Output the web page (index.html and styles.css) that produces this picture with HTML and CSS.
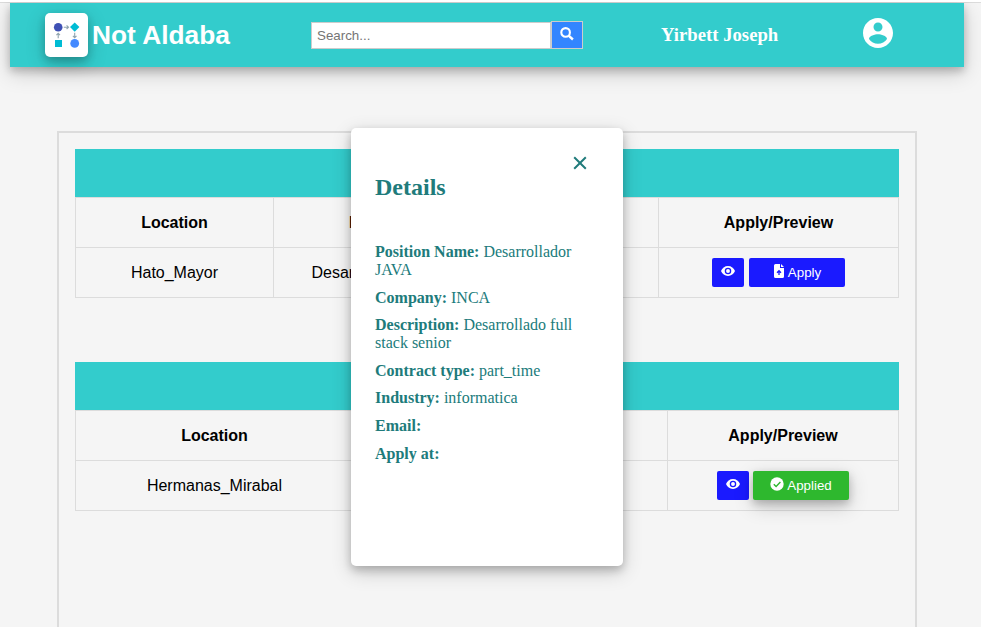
FILE: index.html
```html
<!DOCTYPE html>
<html lang="en">
<head>
<meta charset="utf-8">
<title>Not Aldaba</title>
<link rel="stylesheet" href="styles.css">
</head>
<body>
<header class="header">
  <div class="logo">
    <svg width="43" height="44" viewBox="0 0 43 44">
      <circle cx="13.2" cy="14.2" r="4.3" fill="#3f51b5"/>
      <path d="M29.7 9.4l4.7 4.7-4.7 4.7-4.7-4.7z" fill="#00bcd4"/>
      <path d="M10 27h7v7h-7z" fill="#00bcd4"/>
      <circle cx="29.7" cy="30.4" r="4.4" fill="#448aff"/>
      <path d="M18.8 14.2h4.5M21.6 12.4l1.9 1.8-1.9 1.8M29.7 19.8v4.7M27.9 22.8l1.8 1.9 1.8-1.9M13.2 25.2v-4.7M11.4 22.2l1.8-1.9 1.8 1.9" fill="none" stroke="#90a4ae" stroke-width="1.1"/>
    </svg>
  </div>
  <h1 class="brand">Not Aldaba</h1>
  <form class="search">
    <input class="search-input" type="text" placeholder="Search...">
    <button class="search-button" type="button" aria-label="Search">
      <svg width="14" height="14" viewBox="0 0 14 14"><circle cx="5.6" cy="5.4" r="4.3" fill="none" stroke="#fff" stroke-width="2.1"/><path d="M8.6 8.6l4.3 3.9" stroke="#fff" stroke-width="2.4"/></svg>
    </button>
  </form>
  <span class="user">Yirbett Joseph</span>
  <svg class="avatar" width="36" height="36" viewBox="0 0 24 24" fill="#fff"><path d="M12 2C6.48 2 2 6.48 2 12s4.48 10 10 10 10-4.48 10-10S17.52 2 12 2zm0 3c1.66 0 3 1.34 3 3s-1.34 3-3 3-3-1.34-3-3 1.34-3 3-3zm0 14.2c-2.5 0-4.71-1.28-6-3.22.03-1.99 4-3.08 6-3.08 1.99 0 5.97 1.09 6 3.08-1.29 1.94-3.5 3.22-6 3.22z"/></svg>
</header>

<main class="panel">
  <section class="listing">
    <div class="banner"></div>
    <div class="grid grid-first">
      <div class="cell head">Location</div><div class="cell head position">Position</div><div class="cell"></div><div class="cell head">Apply/Preview</div>
      <div class="cell">Hato_Mayor</div><div class="cell position">Desarrollador JAVA</div><div class="cell"></div>
      <div class="cell actions">
        <button class="btn eye" aria-label="Preview"><svg width="14" height="14" viewBox="0 0 24 24" fill="#fff"><path d="M12 3.5C6.5 3.5 2 7 0 12c2 5 6.500 8.500 12 8.500S22 17 24 12C22 7 17.500 3.500 12 3.500z"/><circle cx="12" cy="12" r="5.600" fill="#1a1aff"/><circle cx="12" cy="12" r="3.300"/></svg></button>
        <button class="btn wide"><svg width="12" height="14" viewBox="0 0 12 14"><path d="M2.500 0H7v4h4v8.500a1.500 1.500 0 0 1-1.500 1.500h-7A1.500 1.500 0 0 1 1 12.500v-11A1.500 1.500 0 0 1 2.500 0zM8 0l3 3H8z" fill="#fff"/><path d="M6 11V7M4 8.700l2-2 2 2" fill="none" stroke="#1a1aff" stroke-width="1.300"/></svg>Apply</button>
      </div>
    </div>
  </section>
  <section class="listing">
    <div class="banner"></div>
    <div class="grid grid-second">
      <div class="cell head">Location</div><div class="cell"></div><div class="cell head">Apply/Preview</div>
      <div class="cell">Hermanas_Mirabal</div><div class="cell"></div>
      <div class="cell actions tight">
        <button class="btn eye" aria-label="Preview"><svg width="14" height="14" viewBox="0 0 24 24" fill="#fff"><path d="M12 3.500C6.500 3.500 2 7 0 12c2 5 6.500 8.500 12 8.500S22 17 24 12C22 7 17.500 3.500 12 3.500z"/><circle cx="12" cy="12" r="5.600" fill="#1a1aff"/><circle cx="12" cy="12" r="3.300"/></svg></button>
        <button class="btn wide applied"><svg width="14" height="14" viewBox="0 0 14 14"><circle cx="7" cy="7" r="6.700" fill="#fff"/><path d="M3.800 7.200l2.300 2.300 4.300-4.500" fill="none" stroke="#2eb82e" stroke-width="1.400"/></svg>Applied</button>
      </div>
    </div>
  </section>
</main>

<aside class="modal" role="dialog">
  <button class="close" aria-label="Close"><svg width="14" height="14" viewBox="0 0 14 14"><path d="M1.200 1.200l11.600 11.600M12.800 1.200L1.200 12.800" stroke="#207b7b" stroke-width="2"/></svg></button>
  <h2 class="title">Details</h2>
  <p class="item"><b>Position Name:</b> Desarrollador JAVA</p>
  <p class="item"><b>Company:</b> INCA</p>
  <p class="item"><b>Description:</b> Desarrollado full stack senior</p>
  <p class="item"><b>Contract type:</b> part_time</p>
  <p class="item"><b>Industry:</b> informatica</p>
  <p class="item"><b>Email:</b></p>
  <p class="item"><b>Apply at:</b></p>
</aside>
</body>
</html>
```
FILE: styles.css
```css
* { box-sizing: border-box; }
html { background: #f5f5f5; }
body {
  margin: 0;
  height: 627px;
  overflow: hidden;
  border-top: 2px solid #fff;
  background: #f5f5f5;
  font-family: "Liberation Sans", Arial, sans-serif;
  color: #000;
}
body::before { content: ""; display: block; height: 1px; background: #dcdcdc; }
button { font-family: inherit; padding: 0; border: 0; }
svg { display: block; flex: none; }

.header {
  width: 954px;
  height: 64px;
  margin-left: 10px;
  padding-left: 35px;
  display: flex;
  align-items: center;
  background: #33cccc;
  box-shadow: 0 4px 8px 0 rgba(0, 0, 0, .2), 0 6px 20px 0 rgba(0, 0, 0, .19);
}
.logo {
  width: 43px;
  height: 44px;
  border-radius: 5px;
  background: #fff;
  box-shadow: 0 4px 8px 0 rgba(0, 0, 0, .2), 0 6px 20px 0 rgba(0, 0, 0, .19);
}
.brand { width: 219px; margin: 0 0 0 4px; font-size: 26.3px; line-height: 32px; color: #fff; white-space: nowrap; }
.search { display: flex; align-items: flex-end; width: 272px; height: 28px; }
.search-input {
  width: 240px;
  height: 27px;
  padding: 0 5px;
  border: 1px solid #ccc;
  border-radius: 0;
  font: 13.333px "Liberation Sans", sans-serif;
  background: #fff;
}
.search-input::placeholder { color: #757575; }
.search-button {
  display: flex;
  width: 32px;
  height: 28px;
  padding: 5px 0 0 8px;
  border: 1px solid #ccc;
  background: #3385ff;
}
.user { width: 199px; margin-left: 78px; font: bold 18.72px "Liberation Serif", serif; color: #fff; }
.avatar { margin-top: -4px; }

.panel {
  width: 860px;
  height: 496px;
  margin: 64px 0 0 57px;
  padding: 16px;
  border: 2px solid #dcdcdc;
  border-bottom: 0;
}
.listing + .listing { margin-top: 64px; }
.banner { height: 48px; background: #33cccc; }
.grid { display: grid; grid-auto-rows: 50px; border: solid #dcdcdc; border-width: 1px 0 0 1px; }
.grid-first { grid-template-columns: 198px 216px 169px 240px; }
.grid-second { grid-template-columns: 278px 314px 231px; }
.cell {
  display: flex;
  align-items: center;
  justify-content: center;
  border: solid #dcdcdc;
  border-width: 0 1px 1px 0;
  font-size: 16px;
}
.head { font-weight: bold; }
.position { padding-right: 2px; }
.actions { gap: 5px; }
.tight { gap: 4px; }
.btn {
  height: 29px;
  display: flex;
  align-items: center;
  justify-content: center;
  gap: 3px;
  border-radius: 2px;
  background: #1a1aff;
  color: #fff;
  font-size: 13.333px;
}
.btn svg { margin-top: -3px; }
.eye { width: 32px; }
.wide { width: 96px; }
.applied { background: #2eb82e; box-shadow: 0 4px 8px 0 rgba(0, 0, 0, .2), 0 6px 20px 0 rgba(0, 0, 0, .19); }

.modal {
  position: absolute;
  left: 351px;
  top: 128px;
  width: 272px;
  height: 438px;
  padding: 28px 24px;
  border-radius: 5px;
  background: #fff;
  box-shadow: 0 4px 8px 0 rgba(0, 0, 0, .2), 0 6px 20px 0 rgba(0, 0, 0, .19);
  color: #207b7b;
  font-family: "Liberation Serif", serif;
}
.close { display: block; margin: 0 12.5px 0 auto; background: none; }
.title { margin: 3px 0 42px; font-size: 24px; line-height: 28px; }
.item { margin: 0 0 9.6px; font-size: 16px; line-height: 18px; }
```
